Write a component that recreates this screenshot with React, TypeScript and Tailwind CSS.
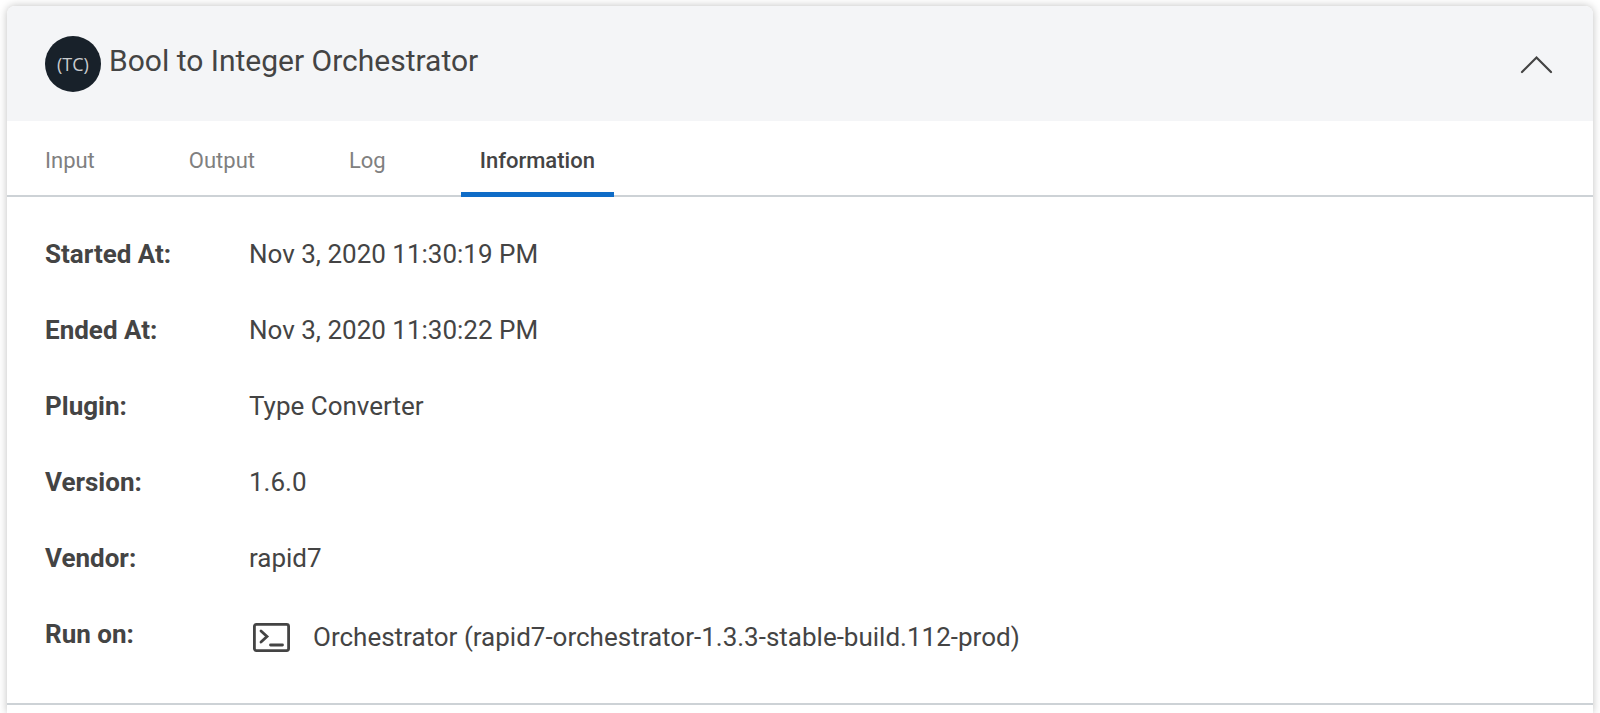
import React, { useState } from 'react';

const tabs = ['Input', 'Output', 'Log', 'Information'];

const details = [
  { label: 'Started At:', value: 'Nov 3, 2020 11:30:19 PM' },
  { label: 'Ended At:', value: 'Nov 3, 2020 11:30:22 PM' },
  { label: 'Plugin:', value: 'Type Converter' },
  { label: 'Version:', value: '1.6.0' },
  { label: 'Vendor:', value: 'rapid7' },
];

const App: React.FC = () => {
  const [activeTab, setActiveTab] = useState('Information');

  return (
    <div className="min-h-screen bg-white px-[7px] pt-1.5 font-['Roboto',sans-serif] text-[#444444]">
      <section className="min-h-[calc(100vh-6px)] rounded-t-lg bg-white shadow-[0_0_8px_rgba(0,0,0,0.25)]">
        {/* Header */}
        <header className="flex h-[115px] items-center rounded-t-lg bg-[#f4f5f7] px-[38px]">
          <div className="flex size-14 items-center justify-center rounded-full bg-[#18212a] font-['Open_Sans',sans-serif] text-lg font-medium text-[#c9cccf]">
            (TC)
          </div>
          <h1 className="ml-2 pb-1.5 text-[30px]">Bool to Integer Orchestrator</h1>
          <button type="button" aria-label="Collapse" className="ml-auto">
            <svg width="36" height="20" viewBox="0 0 36 20" fill="none" stroke="#444444" strokeWidth="2.2" strokeLinecap="round">
              <path d="M3 18 17.5 3.5 32 18" />
            </svg>
          </button>
        </header>

        {/* Tabs */}
        <nav className="flex h-[76px] gap-14 border-b-2 border-[#cdd2d6] px-[19px]">
          {tabs.map((tab) => (
            <button
              key={tab}
              type="button"
              onClick={() => setActiveTab(tab)}
              className={`-mb-0.5 border-b-[5px] px-[19px] pt-2 text-[22px] ${
                activeTab === tab ? 'border-[#0f6cc7] font-medium' : 'border-transparent text-[#808080]'
              }`}
            >
              {tab}
            </button>
          ))}
        </nav>

        {/* Details */}
        <dl className="px-[38px] pt-[39px] text-[26px] leading-9">
          {details.map((item) => (
            <div key={item.label} className="mb-10 flex">
              <dt className="w-[204px] font-bold">{item.label}</dt>
              <dd>{item.value}</dd>
            </div>
          ))}
          <div className="flex">
            <dt className="w-[204px] font-bold">Run on:</dt>
            <dd className="flex items-center pt-[3px]">
              <svg width="44" height="36" viewBox="0 0 44 36" fill="none" stroke="#444444" strokeWidth="2.8" strokeLinecap="round">
                <rect x="5.4" y="5.4" width="34.2" height="26.2" rx="2" />
                <path d="m12 12 6 5.5-6 5.5M21.5 26h12" />
              </svg>
              <span className="ml-5">Orchestrator (rapid7-orchestrator-1.3.3-stable-build.112-prod)</span>
            </dd>
          </div>
        </dl>
        <hr className="mt-12 border-t-2 border-[#cdd2d6]" />
      </section>
    </div>
  );
};

export default App;
